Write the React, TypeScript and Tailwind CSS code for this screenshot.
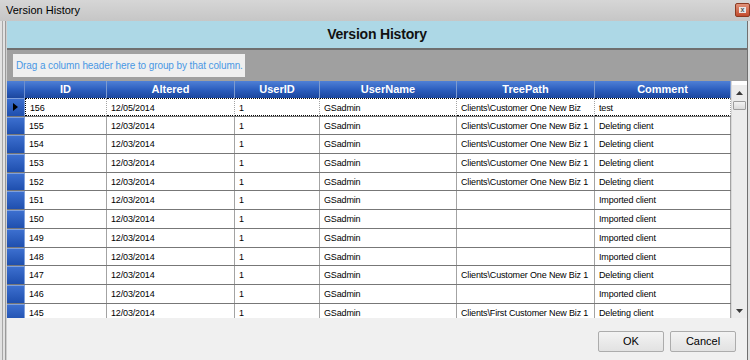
import React from "react";

type Row = { id: string; altered: string; path: string; comment: string };

const P1 = "Clients\\Customer One New Biz 1";
const rows: Row[] = [
  { id: "156", altered: "12/05/2014", path: "Clients\\Customer One New Biz", comment: "test" },
  { id: "155", altered: "12/03/2014", path: P1, comment: "Deleting client" },
  { id: "154", altered: "12/03/2014", path: P1, comment: "Deleting client" },
  { id: "153", altered: "12/03/2014", path: P1, comment: "Deleting client" },
  { id: "152", altered: "12/03/2014", path: P1, comment: "Deleting client" },
  { id: "151", altered: "12/03/2014", path: "", comment: "Imported client" },
  { id: "150", altered: "12/03/2014", path: "", comment: "Imported client" },
  { id: "149", altered: "12/03/2014", path: "", comment: "Imported client" },
  { id: "148", altered: "12/03/2014", path: "", comment: "Imported client" },
  { id: "147", altered: "12/03/2014", path: P1, comment: "Deleting client" },
  { id: "146", altered: "12/03/2014", path: "", comment: "Imported client" },
  { id: "145", altered: "12/03/2014", path: "Clients\\First Customer New Biz 1", comment: "Deleting client" },
];

const headers = [
  { label: "ID", w: "w-[82px]" },
  { label: "Altered", w: "w-[128px]" },
  { label: "UserID", w: "w-[85px]" },
  { label: "UserName", w: "w-[137px]" },
  { label: "TreePath", w: "w-[138px]" },
  { label: "Comment", w: "w-[136px]" },
];

function Cell({ w, children, first, focus }: { w: string; children?: React.ReactNode; first?: boolean; focus?: boolean }) {
  return (
    <div
      className={`${w} shrink-0 h-full pl-[4px] pt-[4px] leading-[11px] text-[9px] tracking-[-0.15px] whitespace-nowrap overflow-hidden border-r border-[#a3a3a3] ${
        focus ? "border-t border-t-black border-dotted border-b border-b-black" : ""
      } ${focus && first ? "border-l border-l-black" : ""}`}
    >
      {children}
    </div>
  );
}

export default function App() {
  return (
    <div
      className="w-[750px] h-[360px] overflow-hidden flex flex-col bg-[#d9d9d9] text-black"
      style={{ fontFamily: '"Liberation Sans", Arial, sans-serif' }}
    >
      {/* Title bar */}
      <div className="h-[21px] shrink-0 flex items-center justify-between bg-gradient-to-b from-[#d6d6d6] to-[#c6c6c6] pl-[6px]">
        <span className="text-[11px] leading-none pb-[1px]">Version History</span>
        <div className="w-[15px] h-[14px] mb-[2px] rounded-[2px] border border-[#8a3a22] bg-gradient-to-b from-[#e0937a] to-[#c24a2c] flex items-center justify-center">
          <div className="w-[7px] h-[6px] bg-[#e9e9e9] flex items-center justify-center text-[7px] leading-none text-[#555] font-bold">x</div>
        </div>
      </div>

      {/* Body with frame */}
      <div className="flex-1 flex min-h-0">
        {/* left frame */}
        <div className="w-[7px] shrink-0 flex bg-[#e2e2e2]">
          <div className="w-[2px]" />
          <div className="w-[1px] bg-[#a8a8a8]" />
          <div className="w-[2px]" />
          <div className="w-[1px] bg-[#9a9a9a]" />
          <div className="w-[1px] bg-[#cfcfcf]" />
        </div>

        <div className="w-[740px] shrink-0 flex flex-col bg-[#f0f0f0]">
          {/* Blue band */}
          <div className="h-[29px] shrink-0 bg-[#add8e6] border-b-2 border-[#6f6f6f] flex items-center justify-center">
            <span className="text-[14px] font-bold tracking-[-0.2px] text-[#111]">Version History</span>
          </div>
          {/* Group area */}
          <div className="h-[31px] shrink-0 bg-[#a0a0a0] flex items-center pl-[6px]">
            <div className="h-[23px] w-[232px] bg-[#efefef] flex items-center pl-[3px] text-[10px] text-[#4a98e4] whitespace-nowrap tracking-[-0.1px]">
              Drag a column header here to group by that column.
            </div>
          </div>

          {/* Grid */}
          <div className="h-[237px] shrink-0 flex">
            <div className="w-[724px] shrink-0 flex flex-col bg-white overflow-hidden">
              {/* Header */}
              <div className="h-[17px] shrink-0 flex bg-gradient-to-b from-[#4f80d6] via-[#2d5fbf] to-[#1c479e]">
                <div className="w-[18px] shrink-0 border-r border-[#6d8fcf]" />
                {headers.map((h) => (
                  <div
                    key={h.label}
                    className={`${h.w} shrink-0 border-r border-[#7d9bd0] flex items-center justify-center text-[11px] font-bold text-white leading-none`}
                  >
                    {h.label}
                  </div>
                ))}
              </div>
              {/* Rows */}
              <div className="flex-1 overflow-hidden">
                {rows.map((r, i) => {
                  const focus = i === 0;
                  return (
                    <div key={r.id} className="h-[18.7px] flex border-b border-[#777777]">
                      <div className="w-[18px] shrink-0 h-full bg-gradient-to-b from-[#3c6fcf] to-[#1f4fae] border-r border-t border-[#7fa0dc] flex items-center justify-center">
                        {focus && (
                          <svg width="5" height="8" viewBox="0 0 5 8">
                            <path d="M0 0 L5 4 L0 8 Z" fill="#000" />
                          </svg>
                        )}
                      </div>
                      <Cell w="w-[82px]" focus={focus} first>
                        {r.id}
                      </Cell>
                      <Cell w="w-[128px]" focus={focus}>
                        {r.altered}
                      </Cell>
                      <Cell w="w-[85px]" focus={focus}>
                        1
                      </Cell>
                      <Cell w="w-[137px]" focus={focus}>
                        GSadmin
                      </Cell>
                      <Cell w="w-[138px]" focus={focus}>
                        {r.path}
                      </Cell>
                      <Cell w="w-[136px]" focus={focus}>
                        {r.comment}
                      </Cell>
                    </div>
                  );
                })}
              </div>
            </div>
            {/* Scrollbar */}
            <div className="w-[16px] shrink-0 flex flex-col bg-[#ececec] border-l border-[#d8d8d8]">
              <div className="h-[4px] bg-white" />
              <div className="h-[15px] flex items-center justify-center">
                <svg width="7" height="4" viewBox="0 0 7 4">
                  <path d="M0 4 L3.5 0 L7 4 Z" fill="#3a3a3a" />
                </svg>
              </div>
              <div className="h-[9px] mx-[1px] mt-[1px] bg-gradient-to-b from-[#f2f2f2] to-[#dadada] border border-[#9d9d9d] rounded-[1px]" />
              <div className="flex-1" />
              <div className="h-[15px] flex items-center justify-center">
                <svg width="7" height="4" viewBox="0 0 7 4">
                  <path d="M0 0 L3.5 4 L7 0 Z" fill="#3a3a3a" />
                </svg>
              </div>
            </div>
          </div>

          {/* Bottom buttons */}
          <div className="flex-1 flex justify-end items-start pt-[13px] pr-[11px] gap-[6px] bg-[#f0f0f0]">
            <button className="w-[66px] h-[21px] border border-[#acacac] rounded-[2px] bg-gradient-to-b from-[#f3f3f3] to-[#e2e2e2] text-[11px] leading-none">
              OK
            </button>
            <button className="w-[66px] h-[21px] border border-[#acacac] rounded-[2px] bg-gradient-to-b from-[#f3f3f3] to-[#e2e2e2] text-[11px] leading-none">
              Cancel
            </button>
          </div>
        </div>

        {/* right frame */}
        <div className="w-[3px] shrink-0 flex bg-[#e2e2e2]">
          <div className="w-[1px] bg-[#707070]" />
          <div className="w-[2px]" />
        </div>
      </div>
    </div>
  );
}
